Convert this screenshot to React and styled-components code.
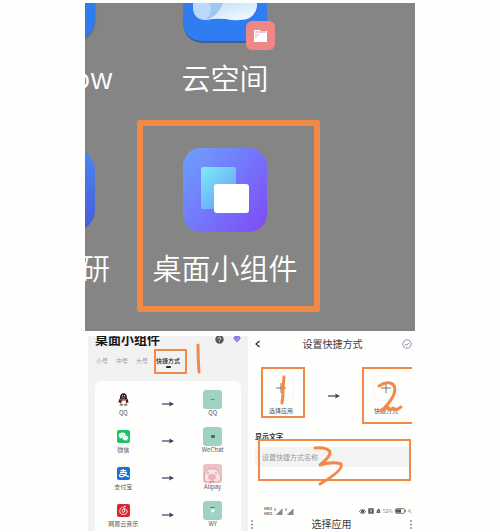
import React from "react";
import styled, { createGlobalStyle } from "styled-components";

const GlobalStyle = createGlobalStyle`
  *, *::before, *::after { box-sizing: border-box; }
  html { overflow: hidden; }
  body {
    margin: 0;
    background: #fefefd;
    font-family: "Noto Sans CJK SC", "Noto Sans", sans-serif;
    color: #333338;
  }
  button { padding: 0; border: 0; background: none; font: inherit; color: inherit; }
  svg { display: block; flex: none; overflow: visible; }
`;

const orange = "#f0894a";

const Page = styled.main`
  width: 66%;
  margin: 0 auto;
  padding-top: 3px;
`;

const HomeScreen = styled.section`
  display: grid;
  grid-template-columns: 52px 183px 1fr;
  align-items: start;
  padding-bottom: 19px;
  background: #858585;
  overflow: hidden;
`;

const EdgeApp = styled.div`
  display: flex;
  flex-direction: column;
  padding-top: ${(p) => p.$top}px;
`;

const EdgeIcon = styled.div`
  width: 10px;
  height: ${(p) => p.$height}px;
  display: flex;
  justify-content: flex-end;

  &::before {
    content: "";
    flex: none;
    width: 84px;
    border-radius: ${(p) => (p.$cut ? "0 0 22px 22px" : "22px")};
    background: ${(p) => p.$fill};
    box-shadow: ${(p) => (p.$cut ? "0 1px 2px #3c5c94" : "none")};
  }
`;

const AppName = styled.span`
  height: 42px;
  margin-top: 14px;
  font-size: 29px;
  font-weight: 350;
  line-height: 42px;
  white-space: nowrap;
  color: #fff;
`;

const EdgeName = styled(AppName)`
  width: ${(p) => p.$width}px;
  display: flex;
  justify-content: flex-end;
`;

const HomeApp = styled.div`
  display: flex;
  flex-direction: column;
  align-items: center;
  height: ${(p) => (p.$framed ? "auto" : "117px")};
  padding: ${(p) => (p.$framed ? "22px 13px 18px 6px" : "0 7px 0 0")};
  border: ${(p) => (p.$framed ? `6px solid ${orange}` : "0")};
  border-radius: 2px;
`;

const IconHolder = styled.div`
  position: relative;
`;

const Badge = styled.div`
  position: absolute;
  right: -8px;
  bottom: -8px;
  display: grid;
  place-items: center;
  width: 29px;
  height: 29px;
  border-radius: 6px;
  background: #ee8785;
`;

const Screens = styled.div`
  display: grid;
  grid-template-columns: 40fr 41fr;
  margin: 5px 3px 0;
`;

const WidgetScreen = styled.section`
  display: flex;
  flex-direction: column;
  padding: 0 7px;
  background: #f2f2f3;
  overflow: hidden;
`;

const WidgetHeader = styled.header`
  display: flex;
  align-items: center;
  height: 16px;
  margin-top: -5px;
`;

const WidgetTitle = styled.h1`
  flex: 1;
  margin: 0;
  font-size: 13px;
  font-weight: 700;
  line-height: 16px;
  color: #17171a;
`;

const HeaderTools = styled.div`
  display: flex;
  gap: 9px;
`;

const Tabs = styled.nav`
  display: flex;
  gap: 8px;
  margin-top: 10px;
  padding-left: 1px;
`;

const Tab = styled.button`
  position: relative;
  font-size: 6px;
  line-height: 8px;
  color: ${(p) => (p.$active ? "#222226" : "#a0a0a4")};
  font-weight: ${(p) => (p.$active ? 500 : 400)};
`;

const TabUnderline = styled.span`
  position: absolute;
  left: 10px;
  top: 9px;
  width: 5px;
  height: 2px;
  border-radius: 1px;
  background: #222226;
`;

const TabFrame = styled.span`
  position: absolute;
  inset: -8px -7px -9px -2px;
  border: 2px solid ${orange};
  border-radius: 1px;
`;

const Mark = styled.svg`
  position: absolute;
  left: ${(p) => p.$x}px;
  top: ${(p) => p.$y}px;
  fill: none;
  stroke: ${orange};
  stroke-linecap: round;
  stroke-linejoin: round;
  stroke-width: 3px;
`;

const ShortcutList = styled.ul`
  display: flex;
  flex-direction: column;
  gap: 10px;
  flex: 1;
  margin: 16px 0 0;
  padding: 9px 6px 3px;
  list-style: none;
  border-radius: 6px 6px 0 0;
  background: #fefefc;
`;

const ShortcutRow = styled.li`
  display: grid;
  grid-template-columns: 1fr 1fr 1fr;
  place-items: center;
`;

const Cell = styled.div`
  display: flex;
  flex-direction: column;
  align-items: center;
`;

const IconBox = styled.div`
  display: grid;
  place-items: center;
  height: 19px;
`;

const SmallLabel = styled.span`
  height: 8px;
  font-size: 6px;
  line-height: 8px;
  white-space: nowrap;
  color: #55555a;
`;

const SetupScreen = styled.section`
  padding-left: 1px;
  background: #fefefc;
`;

const SetupHeader = styled.header`
  display: grid;
  grid-template-columns: 10px 1fr 10px;
  align-items: center;
  justify-items: center;
  height: 16px;
  padding-left: 4px;
`;

const ScreenTitle = styled.h2`
  margin: 0;
  font-size: 10px;
  font-weight: 400;
  line-height: 14px;
  color: #3a3a3e;
`;

const Slots = styled.div`
  display: flex;
  align-items: flex-start;
  justify-content: space-between;
  margin-top: 15px;
  padding-left: 12px;
`;

const Slot = styled.button`
  position: relative;
  display: flex;
  flex-direction: column;
  align-items: center;
  gap: 6px;
  width: ${(p) => (p.$open ? 50 : 44)}px;
  height: ${(p) => (p.$open ? 57 : 51)}px;
  padding: 6px 4px 0 0;
  border: 2px solid ${orange};
  border-right-width: ${(p) => (p.$open ? 0 : 2)}px;
`;

const PlusTile = styled.span`
  display: grid;
  place-items: center;
  width: 26px;
  height: 26px;
  border: 1px solid #f6f6f6;
  border-radius: 5px;
`;

const ArrowHolder = styled.div`
  align-self: center;
`;

const FieldLabel = styled.label`
  display: block;
  margin: 7px 0 6px;
  padding-left: 6px;
  font-size: 7px;
  font-weight: 700;
  line-height: 10px;
  color: #2c2c30;
`;

const Field = styled.div`
  position: relative;
  margin: 0 1px 0 6px;
`;

const FieldInput = styled.input`
  display: block;
  width: 100%;
  height: 20px;
  padding: 0 7px;
  border: 0;
  border-radius: 4px;
  outline: none;
  background: #f3f3f3;
  font-family: inherit;
  font-size: 7px;

  &::placeholder { color: #9b9b9e; opacity: 1; }
`;

const FieldFrame = styled.span`
  position: absolute;
  inset: -8px 0 -14px 3px;
  border: 2px solid ${orange};
  pointer-events: none;
`;

const StatusBar = styled.div`
  display: flex;
  align-items: center;
  justify-content: space-between;
  height: 8px;
  margin-top: 40px;
  padding-left: 15px;
`;

const StatusGroup = styled.div`
  display: flex;
  align-items: center;
  gap: 2px;
  font-size: 5px;
  line-height: 8px;
  color: #88888c;
`;

const Carriers = styled.div`
  display: grid;
  font-size: 4px;
  font-weight: 700;
  line-height: 5px;
  color: #66666a;
`;

const PickerHeader = styled.header`
  display: flex;
  align-items: center;
  justify-content: space-between;
  height: 14px;
  margin-top: 2px;
  padding: 0 0 0 2px;
`;

const CloudIcon = () => (
  <svg width="84" height="39" viewBox="0 0 84 39">
    <defs>
      <linearGradient id="cloud" x1="0" y1="0" x2="1" y2="1">
        <stop offset="0" stopColor="#b9dcfb" />
        <stop offset="1" stopColor="#f6fcff" />
      </linearGradient>
    </defs>
    <path d="M0 0H84V17Q84 40 62 40H22Q0 40 0 17Z" fill="#3c5f98" />
    <path d="M0 0H84V16Q84 38 62 38H22Q0 38 0 16Z" fill="#307df2" />
    <path d="M10 0H74V4Q71 17 57 17Q51 18 43 16Q31 15 24 17Q12 18 10 6Z" fill="url(#cloud)" />
    <path d="M10 0H40Q35 14 23 17Q12 17 10 6Z" fill="#9fc6f5" />
    <path d="M10 0H25Q32 5 23 17Q12 17 10 6Z" fill="#bcd8f8" />
  </svg>
);

const FolderIcon = () => (
  <svg width="15" height="14" viewBox="0 0 15 14">
    <path d="M1 1H7L8 2H14V13H1Z" fill="#fff" />
    <path d="M2 3H13" stroke="#d88bc0" strokeWidth="1" />
    <path d="M2 6H6M2 8H4" stroke="#ebaead" strokeWidth="1" />
  </svg>
);

const WidgetIcon = () => (
  <svg width="84" height="84" viewBox="0 0 84 84">
    <defs>
      <linearGradient id="tile" x1="0" y1="0.1" x2="1" y2="0.9">
        <stop offset="0" stopColor="#6d9efc" />
        <stop offset="0.55" stopColor="#7572fb" />
        <stop offset="1" stopColor="#7f4df5" />
      </linearGradient>
      <linearGradient id="pane" x1="0.1" y1="0" x2="0.9" y2="1">
        <stop offset="0" stopColor="#7ce9fa" />
        <stop offset="1" stopColor="#6898f7" />
      </linearGradient>
    </defs>
    <rect width="84" height="84" rx="18" fill="url(#tile)" />
    <rect x="18" y="19" width="35" height="42" rx="2" fill="url(#pane)" />
    <rect x="31" y="36" width="35" height="29" rx="3" fill="#fff" />
  </svg>
);

const Arrow = () => (
  <svg width="12" height="6" viewBox="0 0 12 6">
    <path d="M0 3H8" stroke="#3b3a60" strokeWidth="1.2" />
    <path d="M7 0.5L12 3L7 5.5L8 3Z" fill="#3b3a60" />
  </svg>
);

const QQIcon = () => (
  <svg width="13" height="13" viewBox="0 0 13 13">
    <ellipse cx="4.3" cy="12" rx="2" ry="0.9" fill="#c98a4a" />
    <ellipse cx="8.7" cy="12" rx="2" ry="0.9" fill="#c98a4a" />
    <path d="M6.5 0.3C3.8 0.3 3 2.5 3.1 5C2 6.5 1.3 8.4 1.8 10L3 9.3C3.5 11.4 5 12 6.5 12S9.5 11.4 10 9.3L11.2 10C11.7 8.4 11 6.5 9.9 5C10 2.5 9.2 0.3 6.5 0.3Z" fill="#25202a" />
    <ellipse cx="6.5" cy="9" rx="2.6" ry="2.7" fill="#fff" />
    <path d="M2.9 5.6Q6.5 7.6 10.1 5.6L10.3 6.8Q6.5 8.8 2.8 6.8Z" fill="#d7303c" />
    <path d="M4 7L5.2 7.5V9.4H4Z" fill="#d7303c" />
    <ellipse cx="5.4" cy="2.8" rx="0.6" ry="0.8" fill="#ddd" />
    <ellipse cx="7.6" cy="2.8" rx="0.6" ry="0.8" fill="#ddd" />
    <ellipse cx="6.5" cy="4.7" rx="1.8" ry="0.5" fill="#c98a4a" />
  </svg>
);

const WeChatIcon = () => (
  <svg width="13" height="13" viewBox="0 0 13 13">
    <rect width="13" height="13" rx="2" fill="#18c466" />
    <path d="M5.3 2.6C3.2 2.6 1.7 3.9 1.7 5.5C1.7 6.4 2.2 7.2 3 7.7L2.7 8.8L4 8.1C6.8 8.7 8.9 7.2 8.9 5.5C8.9 3.9 7.3 2.6 5.3 2.6Z" fill="#fff" />
    <path d="M8.4 5.4C6.6 5.4 5.3 6.5 5.3 7.9S6.6 10.4 8.4 10.4L9.4 10.2L10.5 10.8L10.3 9.8C11.1 9.3 11.5 8.7 11.5 7.9C11.5 6.5 10.1 5.4 8.4 5.4Z" fill="#fff" stroke="#18c466" strokeWidth="0.4" />
    <g fill="#18c466">
      <circle cx="4.1" cy="4.8" r="0.4" /><circle cx="6.5" cy="4.8" r="0.4" />
      <circle cx="7.4" cy="7.3" r="0.4" /><circle cx="9.4" cy="7.3" r="0.4" />
    </g>
  </svg>
);

const AlipayIcon = () => (
  <svg width="13" height="13" viewBox="0 0 13 13">
    <rect width="13" height="13" rx="2" fill="#1a70de" />
    <path d="M3.5 3.5H9M6.2 2V5.2M3 5.3H9.4C9 7.4 7 9.9 4.4 9.9C1.9 9.9 1.9 7.2 4.3 7.2C6.6 7.2 8.6 8.7 12 9.7" fill="none" stroke="#fff" strokeWidth="1.2" />
  </svg>
);

const NeteaseIcon = () => (
  <svg width="13" height="13" viewBox="0 0 13 13">
    <rect width="13" height="13" rx="2" fill="#dd2431" />
    <path d="M8.7 2.2C7.6 1.6 6.7 2.3 6.9 3.3L7.7 7.1C7.9 8.7 5 8.8 5 6.9C5 5.1 7.1 4.3 8.8 5.1C10.4 5.8 10.6 8 9.3 9.4C7.8 11 4.8 11 3.4 9.1C1.9 7 2.9 4.2 5.2 3.2" fill="none" stroke="#fff" strokeWidth="0.9" strokeLinecap="round" />
  </svg>
);

const MintTile = ({ children }) => (
  <svg width="19" height="19" viewBox="0 0 19 19">
    <rect width="19" height="19" rx="3" fill="#a0d2c4" />
    {children}
  </svg>
);

const QQTile = () => (
  <MintTile><path d="M7 9Q9.5 11 12 9Z" fill="#53766f" /><path d="M8 4H11" stroke="#b8ddd3" /></MintTile>
);

const WeChatTile = () => (
  <MintTile><rect x="8" y="8" width="4" height="3" rx="1" fill="#496e68" /></MintTile>
);

const PigTile = () => (
  <svg width="19" height="19" viewBox="0 0 19 19">
    <rect width="19" height="19" rx="3" fill="#efc0c5" />
    <path d="M2 17Q0 9 5 6L6 4L8 5Q14 4 16 9Q20 14 15 18H4Z" fill="#fae2e0" stroke="#cf8d93" strokeWidth="0.6" />
    <ellipse cx="9" cy="13" rx="3.5" ry="2.4" fill="#f4c6c8" stroke="#cf8088" strokeWidth="0.6" />
    <circle cx="8" cy="13" r="0.5" fill="#a95861" /><circle cx="10.2" cy="13" r="0.5" fill="#a95861" />
    <path d="M4 9L6 9M12 9H14" stroke="#b06b73" strokeWidth="0.7" />
    <path d="M6 18Q9 15 12 18Z" fill="#de7c83" />
  </svg>
);

const MusicTile = () => (
  <MintTile><path d="M7.5 6.5H11.5" stroke="#53766f" /><circle cx="9.8" cy="9.8" r="1.7" fill="#fff" /></MintTile>
);

const HelpIcon = () => (
  <svg width="9" height="9" viewBox="0 0 9 9">
    <circle cx="4.5" cy="4.5" r="4.2" fill="#55555f" />
    <path d="M3.2 3.7C3.2 1.8 6 2 5.8 3.7C5.7 4.5 4.5 4.5 4.5 5.5M4.5 6.3V7.2" stroke="#f2f2f3" strokeWidth="0.9" fill="none" />
  </svg>
);

const GemIcon = () => (
  <svg width="8" height="8" viewBox="0 0 8 8">
    <path d="M1.6 1H6.4L7.8 3.4L4 7.6L0.2 3.4Z" fill="#8c7bdc" />
    <path d="M2.4 3.3L4 5L5.6 3.3" stroke="#c9bff2" strokeWidth="0.7" fill="none" />
  </svg>
);

const BackIcon = () => (
  <svg width="6" height="8" viewBox="0 0 6 8">
    <path d="M4.5 1L1 4L4.5 7" fill="none" stroke="#222226" strokeWidth="1.1" />
  </svg>
);

const ConfirmIcon = () => (
  <svg width="10" height="10" viewBox="0 0 10 10">
    <circle cx="5" cy="5" r="4.2" fill="none" stroke="#7270a8" strokeWidth="0.8" />
    <path d="M3 5L4.5 6.4L7.1 3.7" fill="none" stroke="#7270a8" strokeWidth="0.9" />
  </svg>
);

const PlusIcon = () => (
  <svg width="10" height="10" viewBox="0 0 10 10">
    <path d="M5 0V10M0 5H10" stroke="#55555e" strokeWidth="0.8" />
  </svg>
);

const SignalIcon = () => (
  <svg width="9" height="7" viewBox="0 0 9 7">
    <path d="M0 1H2M1 1V3" stroke="#77777b" strokeWidth="0.8" />
    <path d="M2.5 7V5.5H4V4H5.5V2.5H7V1H8.5V7Z" fill="#88888c" />
  </svg>
);

const EyeIcon = () => (
  <svg width="7" height="5" viewBox="0 0 7 5">
    <path d="M0.3 2.5Q3.5 -1.3 6.7 2.5Q3.5 6.3 0.3 2.5Z" fill="none" stroke="#44444a" strokeWidth="0.8" />
    <circle cx="3.7" cy="2.5" r="1.4" fill="#44444a" />
  </svg>
);

const AlarmIcon = () => (
  <svg width="6" height="6" viewBox="0 0 6 6">
    <path d="M0.3 0.3H5.7V5.7H0.3Z" fill="#505056" />
    <path d="M2 1.5L4 4.5M4 1.5L2 4.5" stroke="#fff" strokeWidth="0.6" />
  </svg>
);

const MuteIcon = () => (
  <svg width="5" height="6" viewBox="0 0 5 6">
    <path d="M0.5 5L1 2Q2.5 -0.5 4 2L4.6 5Z" fill="#505056" />
    <path d="M0.5 0.5L4.8 5.7" stroke="#fff" strokeWidth="0.6" />
  </svg>
);

const BatteryIcon = () => (
  <svg width="11" height="6" viewBox="0 0 10 5">
    <rect x="0.4" y="0.4" width="8.4" height="4.2" rx="1" fill="none" stroke="#66666a" strokeWidth="0.8" />
    <rect x="1" y="1" width="4.5" height="3" fill="#55555a" />
    <path d="M9.5 1.6V3.4" stroke="#66666a" strokeWidth="0.8" />
  </svg>
);

const MoreIcon = () => (
  <svg width="2" height="9" viewBox="0 0 2 9" fill="#44444a">
    <circle cx="1" cy="1" r="0.8" /><circle cx="1" cy="4.5" r="0.8" /><circle cx="1" cy="8" r="0.8" />
  </svg>
);

const shortcuts = [
  { app: "QQ", Icon: QQIcon, name: "QQ", Tile: QQTile },
  { app: "微信", Icon: WeChatIcon, name: "WeChat", Tile: WeChatTile },
  { app: "支付宝", Icon: AlipayIcon, name: "Alipay", Tile: PigTile },
  { app: "网易云音乐", Icon: NeteaseIcon, name: "WY", Tile: MusicTile },
];

export default function App() {
  return (
    <>
      <GlobalStyle />
      <Page>
        <HomeScreen>
          <EdgeApp $top={0}>
            <EdgeIcon $height={38} $cut $fill="#2f7cef" />
            <EdgeName $width={28}>ow</EdgeName>
          </EdgeApp>
          <HomeApp>
            <IconHolder>
              <CloudIcon />
              <Badge><FolderIcon /></Badge>
            </IconHolder>
            <AppName>云空间</AppName>
          </HomeApp>
          <span />
          <EdgeApp $top={28}>
            <EdgeIcon $height={84} $fill="linear-gradient(#4a87ee, #485bd8)" />
            <EdgeName $width={25}>研</EdgeName>
          </EdgeApp>
          <HomeApp $framed>
            <WidgetIcon />
            <AppName>桌面小组件</AppName>
          </HomeApp>
        </HomeScreen>

        <Screens>
          <WidgetScreen>
            <WidgetHeader>
              <WidgetTitle>桌面小组件</WidgetTitle>
              <HeaderTools>
                <button aria-label="帮助"><HelpIcon /></button>
                <button aria-label="会员"><GemIcon /></button>
              </HeaderTools>
            </WidgetHeader>
            <Tabs>
              <Tab>小号</Tab>
              <Tab>中号</Tab>
              <Tab>大号</Tab>
              <Tab $active>
                快捷方式
                <TabUnderline />
                <TabFrame />
                <Mark $x={40} $y={-13} width="6" height="30" viewBox="0 0 6 30">
                  <path d="M2 1Q2 15 3 28" />
                </Mark>
              </Tab>
            </Tabs>
            <ShortcutList>
              {shortcuts.map(({ app, Icon, name, Tile }) => (
                <ShortcutRow key={name}>
                  <Cell>
                    <IconBox><Icon /></IconBox>
                    <SmallLabel>{app}</SmallLabel>
                  </Cell>
                  <Arrow />
                  <Cell>
                    <IconBox><Tile /></IconBox>
                    <SmallLabel>{name}</SmallLabel>
                  </Cell>
                </ShortcutRow>
              ))}
            </ShortcutList>
          </WidgetScreen>

          <SetupScreen>
            <SetupHeader>
              <button aria-label="返回"><BackIcon /></button>
              <ScreenTitle>设置快捷方式</ScreenTitle>
              <button aria-label="确定"><ConfirmIcon /></button>
            </SetupHeader>
            <Slots>
              <Slot>
                <PlusTile><PlusIcon /></PlusTile>
                <SmallLabel>选择应用</SmallLabel>
                <Mark $x={16} $y={8} width="8" height="30" viewBox="0 0 8 30">
                  <path d="M5 0Q4 10 4 15T3 26" />
                </Mark>
              </Slot>
              <ArrowHolder><Arrow /></ArrowHolder>
              <Slot $open>
                <PlusTile><PlusIcon /></PlusTile>
                <SmallLabel>快捷方式</SmallLabel>
                <Mark $x={12} $y={12} width="30" height="34" viewBox="0 0 30 34">
                  <path d="M3 5Q9 1 14 2Q21 4 18 13Q15 21 5 30L12 26L14 29L17 27L20 29L25 26" />
                </Mark>
              </Slot>
            </Slots>
            <FieldLabel htmlFor="shortcut-name">显示文字</FieldLabel>
            <Field>
              <FieldInput id="shortcut-name" type="text" placeholder="设置快捷方式名称" />
              <FieldFrame />
              <Mark $x={58} $y={0} width="32" height="40" viewBox="0 0 32 40">
                <path d="M2 1Q14 0 17 5Q18 9 7 18Q21 14 28 17Q31 23 7 37" />
              </Mark>
            </Field>
            <StatusBar>
              <StatusGroup>
                <Carriers><span>HD1</span><span>HD2</span></Carriers>
                <SignalIcon />
                <SignalIcon />
              </StatusGroup>
              <StatusGroup>
                <EyeIcon />
                <AlarmIcon />
                <MuteIcon />
                <span>52%</span>
                <BatteryIcon />
                <span>4:</span>
              </StatusGroup>
            </StatusBar>
            <PickerHeader>
              <MoreIcon />
              <ScreenTitle>选择应用</ScreenTitle>
              <MoreIcon />
            </PickerHeader>
          </SetupScreen>
        </Screens>
      </Page>
    </>
  );
}
